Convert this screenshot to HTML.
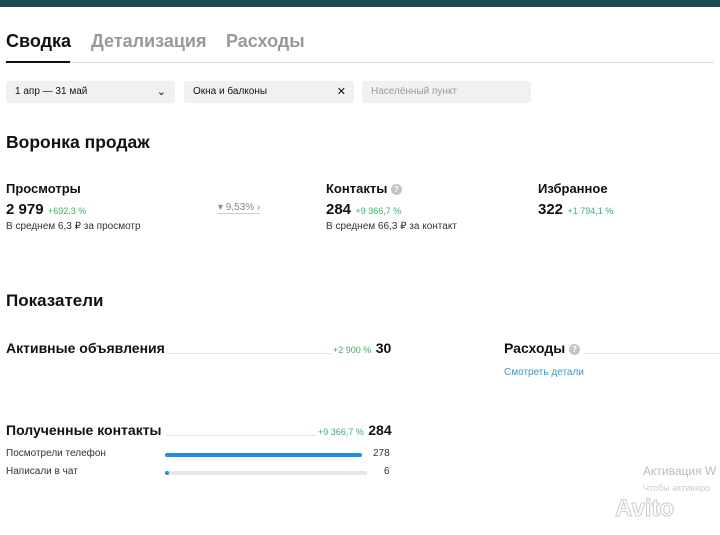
<!DOCTYPE html><html><head><meta charset="utf-8"><style>
body{margin:0;width:720px;height:535px;background:#fff;font-family:"Liberation Sans",sans-serif;color:#111;position:relative;overflow:hidden}
.a{position:absolute;white-space:nowrap}
.b{font-weight:bold}
.g{color:#3bb36a;font-size:9px}
.box{position:absolute;top:81px;height:22px;background:#f1f1f1;border-radius:3px;font-size:10px;line-height:22px;padding-left:9px;box-sizing:border-box}
.q{display:inline-block;width:11px;height:11px;border-radius:50%;background:#c4c4c4;color:#fff;font-size:8px;text-align:center;line-height:11px;vertical-align:1px}
.ln{position:absolute;border-top:1px solid #e2e2e2}
</style></head><body>
<div class="a" style="left:0;top:0;width:720px;height:7px;background:#1b4a50"></div>
<div class="a b" style="left:6px;top:31px;font-size:18px">Сводка</div>
<div class="a b" style="left:91px;top:31px;font-size:18px;color:#999">Детализация</div>
<div class="a b" style="left:226px;top:31px;font-size:18px;color:#999">Расходы</div>
<div class="a" style="left:6px;top:62px;width:708px;height:1px;background:#ddd"></div>
<div class="a" style="left:6px;top:61px;width:64px;height:2px;background:#111"></div>
<div class="box" style="left:6px;width:169px">1 апр — 31 май<span style="position:absolute;right:9px;top:0;font-size:11px">⌄</span></div>
<div class="box" style="left:184px;width:170px">Окна и балконы<span style="position:absolute;right:8px;top:0;font-size:11px">✕</span></div>
<div class="box" style="left:362px;width:169px;color:#999">Населённый пункт</div>
<div class="a b" style="left:6px;top:132px;font-size:17.5px">Воронка продаж</div>
<div class="a b" style="left:6px;top:181px;font-size:13px">Просмотры</div>
<div class="a" style="left:6px;top:201px"><span class="b" style="font-size:15px">2 979</span> <span class="g">+692,3 %</span></div>
<div class="a" style="left:6px;top:221px;font-size:10px;color:#333">В среднем 6,3 ₽ за просмотр</div>
<div class="a" style="left:218px;top:202px;font-size:10px;color:#888;border-bottom:1px solid #ccc">▾ 9,53% ›</div>
<div class="a b" style="left:326px;top:181px;font-size:13px">Контакты <span class="q">?</span></div>
<div class="a" style="left:326px;top:201px"><span class="b" style="font-size:15px">284</span> <span class="g">+9 366,7 %</span></div>
<div class="a" style="left:326px;top:221px;font-size:10px;color:#333">В среднем 66,3 ₽ за контакт</div>
<div class="a b" style="left:538px;top:181px;font-size:13px">Избранное</div>
<div class="a" style="left:538px;top:201px"><span class="b" style="font-size:15px">322</span> <span class="g">+1 794,1 %</span></div>
<div class="a b" style="left:6px;top:291px;font-size:17px">Показатели</div>
<div class="a b" style="left:6px;top:340px;font-size:14px">Активные объявления</div>
<div class="ln" style="left:168px;top:353px;width:164px"></div>
<div class="a" style="left:333px;top:340px"><span class="g">+2 900 %</span> <span class="b" style="font-size:14px">30</span></div>
<div class="a b" style="left:504px;top:340px;font-size:14px">Расходы <span class="q">?</span></div>
<div class="ln" style="left:585px;top:353px;width:135px"></div>
<div class="a" style="left:504px;top:367px;font-size:10px;color:#3a98d8">Смотреть детали</div>
<div class="a b" style="left:6px;top:422px;font-size:14px">Полученные контакты</div>
<div class="ln" style="left:166px;top:435px;width:150px"></div>
<div class="a" style="left:318px;top:422px"><span class="g">+9 366,7 %</span> <span class="b" style="font-size:14px">284</span></div>
<div class="a" style="left:6px;top:448px;font-size:10px;color:#333">Посмотрели телефон</div>
<div class="a" style="left:165px;top:453px;width:197px;height:4px;border-radius:2px;background:#1e8fdc"></div>
<div class="a" style="left:373px;top:448px;font-size:10px;color:#333">278</div>
<div class="a" style="left:6px;top:466px;font-size:10px;color:#333">Написали в чат</div>
<div class="a" style="left:165px;top:471px;width:202px;height:4px;border-radius:2px;background:#e6e6e6"></div>
<div class="a" style="left:165px;top:471px;width:4px;height:4px;border-radius:2px;background:#1e8fdc"></div>
<div class="a" style="left:384px;top:466px;font-size:10px;color:#333">6</div>
<div class="a" style="left:643px;top:464px;font-size:12px;color:#bbb">Активация W</div>
<div class="a" style="left:643px;top:483px;font-size:9px;color:#ccc">Чтобы активиро</div>
<div class="a b" style="left:615px;top:495px;font-size:24px;color:#fff;-webkit-text-stroke:1px #ccc">Avito</div>
</body></html>
